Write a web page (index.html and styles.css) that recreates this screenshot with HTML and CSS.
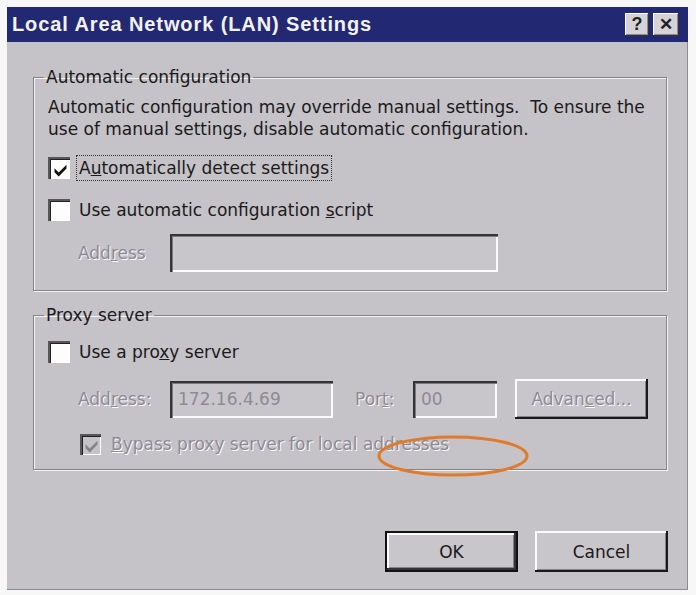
FILE: index.html
```html
<!DOCTYPE html>
<html>
<head>
<meta charset="utf-8">
<link rel="stylesheet" href="styles.css">
</head>
<body>
<div class="window">
  <div class="titlebar">
    <span class="title">Local Area Network (LAN) Settings</span>
    <div class="tbtns">
      <span class="tbtn help">?</span>
      <span class="tbtn close">✕</span>
    </div>
  </div>
  <div class="content">
    <fieldset class="group g1">
      <legend>Automatic configuration</legend>
      <p class="desc">Automatic configuration may override manual settings.&nbsp; To ensure the<br>use of manual settings, disable automatic configuration.</p>
      <div class="row r1"><span class="cb checked"><svg viewBox="0 0 10 10"><path d="M1 4.2 L3.8 7 L9 1.8 L9 4.4 L3.8 9.6 L1 6.8 Z"/></svg></span><span class="focus">A<u>u</u>tomatically detect settings</span></div>
      <div class="row r2"><span class="cb"></span><span class="lbl">Use automatic configuration <u>s</u>cript</span></div>
      <div class="row r3"><span class="dis flabel">Add<u>r</u>ess</span><span class="input in-wide"></span></div>
    </fieldset>
    <fieldset class="group g2">
      <legend>Proxy server</legend>
      <div class="row p1"><span class="cb"></span><span class="lbl">Use a pro<u>x</u>y server</span></div>
      <div class="row p2">
        <span class="dis flabel">Add<u>r</u>ess:</span>
        <span class="input in-addr dis-val">172.16.4.69</span>
        <span class="dis plabel">Por<u>t</u>:</span>
        <span class="input in-port dis-val">00</span>
        <span class="btn adv dis">Advan<u>c</u>ed...</span>
      </div>
      <div class="row p3"><span class="cb small dis-cb"><svg viewBox="0 0 10 10"><path d="M1 4.2 L3.8 7 L9 1.8 L9 4.4 L3.8 9.6 L1 6.8 Z"/></svg></span><span class="dis bypass"><u>B</u>ypass proxy server for local addresses</span></div>
    </fieldset>
    <div class="buttons">
      <span class="btn default">OK</span>
      <span class="btn">Cancel</span>
    </div>
  </div>
  <svg class="mark" width="156" height="44" viewBox="0 0 156 44"><ellipse cx="78" cy="22" rx="74" ry="19" fill="none" stroke="#e07b2c" stroke-width="3"/></svg>
</div>
</body>
</html>
```
FILE: styles.css
```css
html, body {
  margin: 0;
  padding: 0;
  background: #f7f7f8;
}
body {
  width: 696px;
  height: 595px;
  overflow: hidden;
  font-family: "DejaVu Sans", "Liberation Sans", sans-serif;
  color: #1a1a1a;
}
.window {
  position: relative;
  margin: 7px 0 0 7px;
  width: 681px;
  height: 583px;
  background: #c5c2c8;
  box-shadow: inset -1px -1px 0 #8d8a90;
  display: flex;
  flex-direction: column;
}
.titlebar {
  height: 35px;
  background: #232873;
  display: flex;
  align-items: center;
  justify-content: space-between;
  padding: 0 9px 0 5px;
  flex: none;
}
.title {
  font-family: "Liberation Sans", sans-serif;
  color: #f2f2f6;
  font-weight: bold;
  font-size: 20px;
  letter-spacing: 0.9px;
}
.tbtns {
  display: flex;
  gap: 4px;
}
.tbtn {
  font-family: "Liberation Sans", sans-serif;
  width: 24px;
  height: 23px;
  background: #d6d3d8;
  box-shadow: inset -1px -1px 0 #333, inset 1px 1px 0 #fff, inset -2px -2px 0 #8d8a90;
  display: flex;
  align-items: center;
  justify-content: center;
  font-weight: bold;
  font-size: 18px;
  color: #222;
}
.tbtn.close {
  width: 26px;
  font-size: 17px;
}
.content {
  flex: 1;
  padding: 25px 21px 0 26px;
  display: flex;
  flex-direction: column;
  font-size: 17px;
}
.group {
  margin: 0;
  padding: 0 0 0 14px;
  border: 1px solid #858288;
  box-shadow: 1px 1px 0 #f4f4f6, inset 1px 1px 0 #f4f4f6;
  min-width: 0;
}
.group legend {
  padding: 0 2px;
  margin-left: -4px;
  line-height: 20px;
  font-size: 17px;
  color: #1a1a1a;
}
.g1 {
  height: 222px;
}
.g2 {
  margin-top: 14px;
  height: 163px;
}
.desc {
  margin: 9px 0 0 0;
  line-height: 22px;
  font-size: 17px;
}
.row {
  display: flex;
  align-items: center;
  line-height: 22px;
}
.r1 { margin-top: 15px; height: 26px; }
.r2 { margin-top: 16px; height: 26px; }
.r3 { margin-top: 11px; height: 38px; }
.p1 { margin-top: 14px; height: 26px; }
.p2 { margin-top: 13px; height: 42px; }
.p3 { margin-top: 11px; height: 26px; }
.cb {
  width: 22px;
  height: 22px;
  box-sizing: border-box;
  background: #fdfdfd;
  box-shadow: inset 2px 2px 0 #58565a, inset 3px 3px 0 #222, inset -1px -1px 0 #fff;
  margin-right: 8px;
  flex: none;
  display: flex;
  align-items: center;
  justify-content: center;
  padding: 2px 0 0 2px;
}
.cb svg {
  width: 15px;
  height: 15px;
  fill: #111;
}
.cb.small {
  width: 21px;
  height: 21px;
  margin-left: 32px;
  margin-right: 10px;
  background: #c5c2c8;
}
.cb.dis-cb svg {
  fill: #858288;
}
.focus {
  outline: 1px dotted #333;
  outline-offset: 1px;
  padding: 0 1px;
}
.lbl {
  padding-left: 1px;
}
.dis {
  color: #8e8b92;
  text-shadow: 1px 1px 0 #fbfbfd;
}
.flabel {
  margin-left: 30px;
  width: 92px;
  flex: none;
}
.input {
  height: 38px;
  box-sizing: border-box;
  background: #c8c5cb;
  box-shadow: inset 2px 2px 0 #353337, inset 3px 3px 0 #7d7a80, inset -2px -2px 0 #fbfbfd;
  display: flex;
  align-items: center;
  padding-left: 8px;
  flex: none;
}
.in-wide {
  width: 328px;
}
.in-addr {
  width: 163px;
  height: 37px;
}
.in-port {
  width: 84px;
  height: 37px;
}
.dis-val {
  color: #8e8b92;
}
.plabel {
  margin-left: 22px;
  width: 58px;
  flex: none;
}
.btn {
  box-sizing: border-box;
  width: 133px;
  height: 41px;
  background: #c8c5cb;
  box-shadow: inset -2px -2px 0 #1a1a1a, inset 2px 2px 0 #fbfbfd, inset -3px -3px 0 #858288;
  display: flex;
  align-items: center;
  justify-content: center;
  font-size: 17px;
  flex: none;
}
.adv {
  margin-left: 18px;
  height: 40px;
}
.buttons {
  margin-top: 61px;
  display: flex;
  justify-content: flex-end;
  gap: 17px;
  margin-right: -1px;
}
.btn.default {
  box-shadow: inset 0 0 0 2px #111, inset -4px -4px 0 #333, inset 4px 4px 0 #fbfbfd, inset -5px -5px 0 #858288;
}
.mark {
  position: absolute;
  left: 368px;
  top: 427px;
}
```
